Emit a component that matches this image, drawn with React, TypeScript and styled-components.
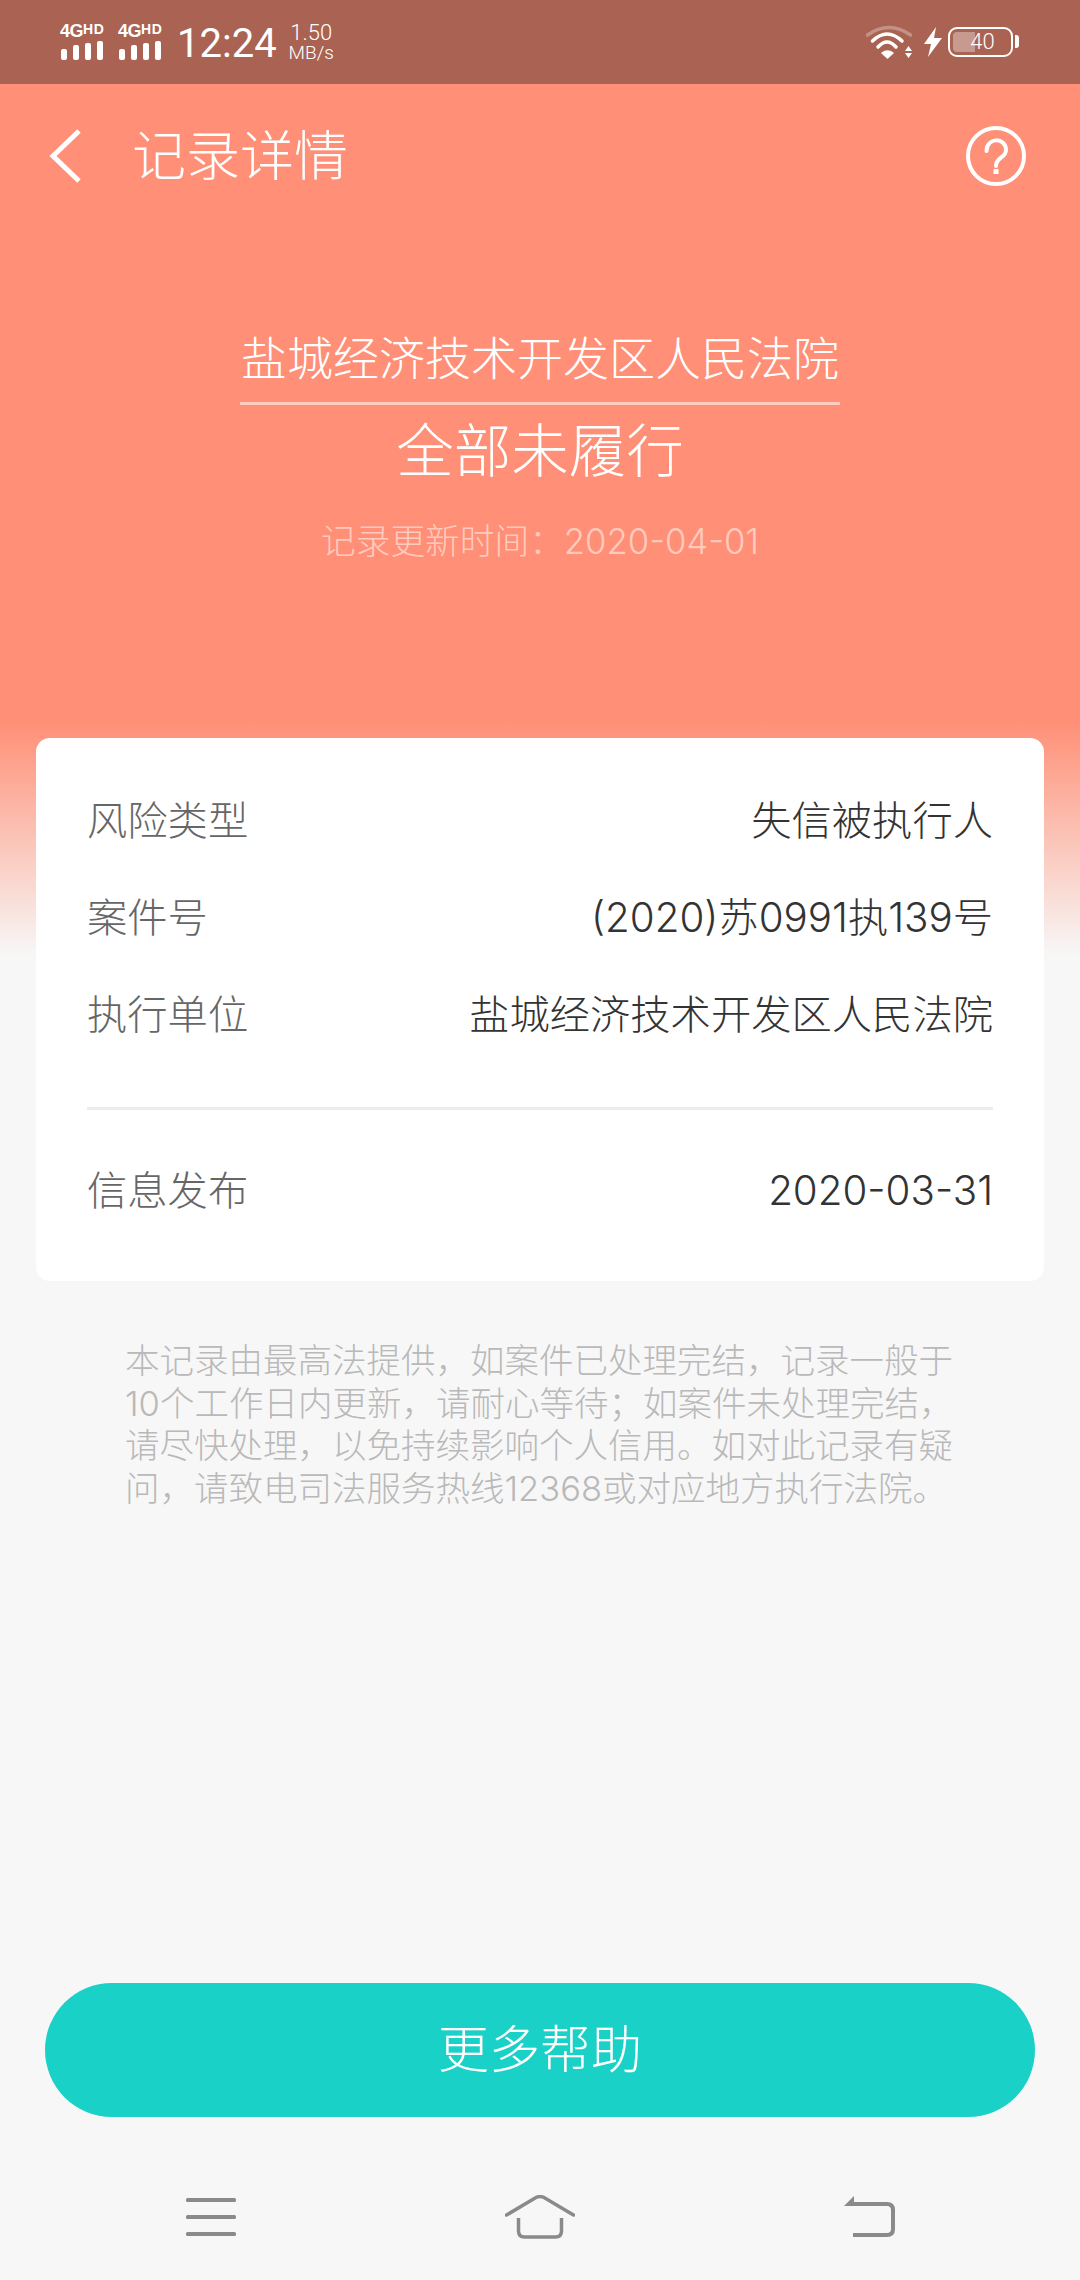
import React from 'react'
import styled, { createGlobalStyle } from 'styled-components'

const CJK = `"Noto Sans CJK SC", "Noto Sans", sans-serif`
const MIXED = `Inter, ${CJK}`

const GlobalStyle = createGlobalStyle`
  html, body {
    margin: 0;
    padding: 0;
    background: #f7f7f7;
  }
  * {
    box-sizing: border-box;
  }
`

const rows = [
  { label: '风险类型', value: '失信被执行人' },
  { label: '案件号', value: '(2020)苏0991执139号' },
  { label: '执行单位', value: '盐城经济技术开发区人民法院' },
]

function Signal() {
  return (
    <SignalBox>
      <NetLabel>
        4G<sup>HD</sup>
      </NetLabel>
      <svg width="44" height="21" viewBox="0 0 44 21" fill="#fff">
        <rect x="1" y="9" width="6" height="11" rx="2" />
        <rect x="13" y="5" width="6" height="15" rx="2" />
        <rect x="25" y="3" width="6" height="17" rx="2" />
        <rect x="37" y="1" width="6" height="19" rx="2" />
      </svg>
    </SignalBox>
  )
}

export default function App() {
  return (
    <Page>
      <GlobalStyle />
      <StatusBar>
        <Signal />
        <Signal />
        <Clock>12:24</Clock>
        <Speed>
          <span>1.50</span>
          <span>MB/s</span>
        </Speed>
        <StatusRight>
          <WifiIcon width="46" height="33" viewBox="0 0 46 33" fill="none" stroke="#fff" strokeLinecap="round">
            <path d="M1.5 9 Q23 -6 44.5 9" strokeWidth="3.5" opacity="0.3" />
            <path d="M6.5 15 Q21 1 36 15" strokeWidth="3.5" />
            <path d="M12 21 Q21 11 30 21" strokeWidth="3.5" />
            <path d="M16 27 Q21.5 23 27 27 L21.5 32 Z" fill="#fff" stroke="#fff" strokeWidth="1.5" strokeLinejoin="round" />
            <path d="M42.5 20 L46 25 H39 Z M39 27 H46 L42.5 32 Z" fill="#fff" stroke="none" />
          </WifiIcon>
          <svg width="18" height="30" viewBox="0 0 18 30" fill="#fff">
            <path d="M12 0 L0 17 H7 L4 30 L18 11 H10 Z" />
          </svg>
          <Battery>
            <BatteryFill />
            <BatteryText>40</BatteryText>
          </Battery>
        </StatusRight>
      </StatusBar>

      <Header>
        <BackIcon width="36" height="56" viewBox="0 0 36 56" fill="none" stroke="#fff" strokeWidth="5">
          <path d="M32 3 L6 28 L32 53" />
        </BackIcon>
        <Title>记录详情</Title>
        <HelpIcon width="60" height="60" viewBox="0 0 60 60" fill="none" stroke="#fff" strokeWidth="4">
          <circle cx="30" cy="30" r="28" />
          <path d="M20.5 25 C20.5 11 40 11 40 24 C40 32 30 31 30 40" strokeLinecap="round" />
          <path d="M30 43 V48" strokeWidth="5" />
        </HelpIcon>
      </Header>

      <Hero>
        <Court>盐城经济技术开发区人民法院</Court>
        <Status>全部未履行</Status>
        <Updated>记录更新时间：2020-04-01</Updated>
      </Hero>

      <Card>
        {rows.map((row) => (
          <Row key={row.label}>
            <Label>{row.label}</Label>
            <Value>{row.value}</Value>
          </Row>
        ))}
        <Divider />
        <Row>
          <Label>信息发布</Label>
          <Value>2020-03-31</Value>
        </Row>
      </Card>

      <Note>
        本记录由最高法提供，如案件已处理完结，记录一般于10个工作日内更新，请耐心等待；如案件未处理完结，请尽快处理，以免持续影响个人信用。如对此记录有疑问，请致电司法服务热线12368或对应地方执行法院。
      </Note>

      <Spacer />

      <HelpButton type="button">
        <span>更多帮助</span>
      </HelpButton>

      <NavBar>
        <svg width="50" height="40" viewBox="0 0 50 40" fill="#8a8a8a">
          <rect x="0" y="1" width="50" height="4" rx="1.5" />
          <rect x="0" y="18" width="50" height="4" rx="1.5" />
          <rect x="0" y="35" width="50" height="4" rx="1.5" />
        </svg>
        <svg width="70" height="44" viewBox="0 0 70 44" fill="none" stroke="#8a8a8a" strokeWidth="3.5">
          <path d="M1.5 20 L31 2.5 Q35 0.5 39 2.5 L68.5 20" strokeLinecap="round" />
          <path d="M13.5 23 V36 Q13.5 42 19.5 42 H50.5 Q56.5 42 56.5 36 V23" />
        </svg>
        <svg width="51" height="42" viewBox="0 0 51 42" fill="none" stroke="#8a8a8a" strokeWidth="4">
          <path d="M6 8 H43 Q49 8 49 14 V33 Q49 39 43 39 H9" />
          <path d="M0 10 L10 0 V10 Z" fill="#8a8a8a" stroke="none" />
        </svg>
      </NavBar>
    </Page>
  )
}

const Page = styled.div`
  display: flex;
  flex-direction: column;
  width: 1080px;
  height: 2280px;
  overflow: hidden;
  font-family: ${CJK};
  background: linear-gradient(180deg, #ff8f76 0, #ff8f76 720px, #f7f7f7 955px, #f7f7f7 100%);
`

const StatusBar = styled.div`
  display: flex;
  align-items: center;
  height: 84px;
  padding: 0 60px;
  background: #aa6353;
  color: #fff;
`

const SignalBox = styled.div`
  display: flex;
  flex-direction: column;
  flex: none;
  gap: 1px;
  width: 58px;
`

const NetLabel = styled.div`
  font-family: "Liberation Sans", sans-serif;
  font-size: 18px;
  font-weight: bold;
  line-height: 15px;
  letter-spacing: -0.5px;
  white-space: nowrap;

  sup {
    font-size: 14px;
    line-height: 0;
    letter-spacing: 0.5px;
    vertical-align: 3px;
  }
`

const Clock = styled.div`
  margin-left: 1px;
  padding-top: 3px;
  font-family: Roboto, sans-serif;
  font-size: 40px;
  line-height: 84px;
`

const Speed = styled.div`
  display: flex;
  flex-direction: column;
  align-items: center;
  margin-left: 12px;
  padding-top: 1px;
  font-family: Roboto, sans-serif;
  font-weight: 300;
  font-size: 22px;
  line-height: 20px;

  span:last-child {
    font-size: 19px;
  }
`

const StatusRight = styled.div`
  display: flex;
  align-items: center;
  gap: 6px;
  margin-left: auto;
`

const WifiIcon = styled.svg`
  margin-right: 6px;
  overflow: visible;
`

const Battery = styled.div`
  position: relative;
  width: 65px;
  height: 30px;
  margin-right: 7px;
  padding: 3px;
  border: 2.5px solid #fff;
  border-radius: 9px;

  &::after {
    content: '';
    position: absolute;
    top: 6px;
    right: -8px;
    width: 4px;
    height: 13px;
    border-radius: 0 3px 3px 0;
    background: #fff;
  }
`

const BatteryFill = styled.div`
  width: 22px;
  height: 100%;
  border-radius: 4px 0 0 4px;
  background: rgba(255, 255, 255, 0.35);
`

const BatteryText = styled.span`
  position: absolute;
  inset: 0;
  padding-left: 4px;
  font-family: Roboto, sans-serif;
  font-size: 22px;
  font-weight: 300;
  line-height: 25px;
  text-align: center;
  color: #fff;
`

const Header = styled.div`
  display: flex;
  align-items: center;
  height: 144px;
  padding: 0 54px 0 47px;
`

const BackIcon = styled.svg`
  flex: none;
`

const Title = styled.div`
  margin-left: 49px;
  padding-bottom: 8px;
  font-size: 54px;
  font-weight: 300;
  color: #fff;
`

const HelpIcon = styled.svg`
  flex: none;
  margin-left: auto;
`

const Hero = styled.div`
  display: flex;
  flex-direction: column;
  align-items: center;
  height: 510px;
  padding-top: 94px;
  color: #fff;
`

const Court = styled.div`
  width: 600px;
  padding-bottom: 14px;
  border-bottom: 3px solid rgba(255, 255, 255, 0.55);
  font-size: 46px;
  font-weight: 300;
  line-height: 66px;
  text-align: center;
`

const Status = styled.div`
  margin-top: 2px;
  font-size: 57.5px;
  font-weight: 300;
  line-height: 80px;
`

const Updated = styled.div`
  margin-top: 32px;
  font-family: ${MIXED};
  font-size: 34.7px;
  font-weight: 300;
  line-height: 44px;
  color: rgba(255, 255, 255, 0.55);
`

const Card = styled.div`
  display: flex;
  flex-direction: column;
  flex: none;
  height: 543px;
  margin: 0 36px;
  padding: 31px 51px 0;
  border-radius: 14px;
  background: #fff;
`

const Row = styled.div`
  display: flex;
  align-items: baseline;
  justify-content: space-between;
  height: 97px;
  padding-top: 19px;
  font-size: 40.3px;
  font-weight: 300;
`

const Label = styled.span`
  color: #666;
`

const Value = styled.span`
  color: #333;
  font-family: ${MIXED};
`

const Divider = styled.div`
  height: 3px;
  margin: 47px 0 29px;
  background: #ececec;
`

const Note = styled.div`
  margin-top: 59px;
  padding: 0 115px 0 125px;
  font-family: ${MIXED};
  font-size: 34.5px;
  font-weight: 300;
  line-height: 42.7px;
  color: #b9b9b9;
`

const Spacer = styled.div`
  flex: 1;
`

const HelpButton = styled.button`
  display: block;
  flex: none;
  width: 990px;
  height: 134px;
  margin: 0 45px;
  padding: 0 0 8px;
  border: none;
  border-radius: 67px;
  background: #1ad1c8;
  font-family: ${CJK};
  font-size: 51px;
  font-weight: 300;
  color: #fff;
`

const NavBar = styled.div`
  display: flex;
  flex: none;
  align-items: center;
  justify-content: space-between;
  height: 163px;
  padding: 36px 185px 0 186px;
`
